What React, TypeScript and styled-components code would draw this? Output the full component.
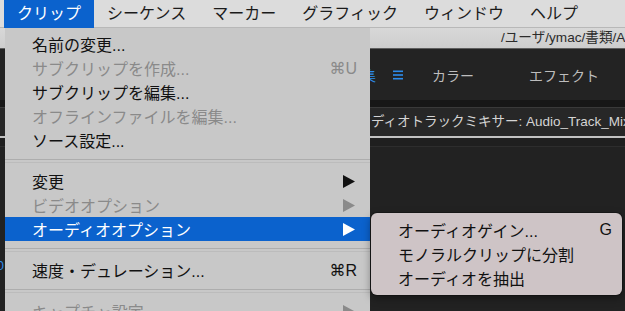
import React from "react";
import styled, { createGlobalStyle } from "styled-components";

const Global = createGlobalStyle`
  html, body { margin: 0; padding: 0; background: #222222; }
  * { box-sizing: border-box; }
`;

const JP = `"Liberation Sans", "Noto Sans CJK JP", "Noto Sans", sans-serif`;

const Screen = styled.div`
  position: relative;
  width: 625px;
  height: 311px;
  overflow: hidden;
  display: flex;
  flex-direction: column;
  font-family: ${JP};
  background: #222222;
`;

const MenuBar = styled.div`
  height: 28px;
  flex: none;
  display: flex;
  align-items: stretch;
  padding-left: 4px;
  background: #dcdcdc;
  border-bottom: 1px solid #b8b8b8;
`;

const MenuTitle = styled.div<{ $active?: boolean }>`
  padding: 0 13px;
  font-size: 16px;
  line-height: 28px;
  height: 28px;
  color: ${(p) => (p.$active ? "#ffffff" : "#1b1b1b")};
  background: ${(p) => (p.$active ? "#0b62cd" : "transparent")};
  white-space: nowrap;
`;

const AppWindow = styled.div`
  flex: 1;
  display: flex;
  flex-direction: column;
  min-height: 0;
`;

const TitleBar = styled.div`
  height: 21px;
  flex: none;
  background: linear-gradient(#d8d8d8, #cdcdcd);
  border-bottom: 1px solid #5e5e5e;
  padding-left: 501px;
  font-size: 13.6px;
  line-height: 20px;
  color: #2b2b2b;
  white-space: nowrap;
  overflow: hidden;
`;

const Toolbar = styled.div`
  height: 51px;
  flex: none;
  background: #232323;
  display: flex;
  align-items: center;
  padding-left: 348px;
  white-space: nowrap;
  overflow: hidden;
`;

const Workspace = styled.div<{ $active?: boolean; $gap?: number }>`
  display: flex;
  align-items: center;
  margin-left: ${(p) => p.$gap ?? 0}px;
  font-size: 14px;
  color: ${(p) => (p.$active ? "#2d8ceb" : "#bdbdbd")};
`;

const MenuLines = styled.svg`
  margin-left: 17px;
  display: block;
`;

const Gutter = styled.div`
  height: 7px;
  flex: none;
  background: #171717;
`;

const PanelHeader = styled.div`
  height: 31px;
  flex: none;
  background: #272727;
  border-top: 1px solid #3a3a3a;
  border-bottom: 2px solid #c2c2c2;
  padding-left: 344px;
  font-size: 13.5px;
  line-height: 28px;
  color: #d4d4d4;
  white-space: nowrap;
  overflow: hidden;
`;

const PanelStrip = styled.div`
  height: 9px;
  flex: none;
  background: #1f1f1f;
  border-bottom: 1px solid #2d2d2d;
`;

const PanelBody = styled.div`
  flex: 1;
  background: #222222;
  display: flex;
  flex-direction: column;
`;

const LeftLabel = styled.div`
  margin-top: 111px;
  width: 4px;
  overflow: hidden;
  direction: rtl;
  font-size: 13px;
  color: #2d8ceb;
  white-space: nowrap;
  font-family: "Liberation Sans", sans-serif;
`;

const DropMenu = styled.div`
  position: absolute;
  top: 28px;
  left: 5px;
  width: 365px;
  height: 300px;
  padding-top: 4px;
  background: #c8c8c8;
`;

const MenuRow = styled.div<{ $disabled?: boolean; $active?: boolean }>`
  height: 24px;
  display: flex;
  align-items: center;
  padding: 0 13px 0 27px;
  font-size: 16px;
  white-space: nowrap;
  color: ${(p) => (p.$active ? "#ffffff" : p.$disabled ? "#8a8a8a" : "#111111")};
  background: ${(p) => (p.$active ? "#0b62cd" : "transparent")};
`;

const Label = styled.span`
  flex: 1;
`;

const Shortcut = styled.span`
  font-family: "Liberation Sans", "DejaVu Sans", sans-serif;
  font-size: 16px;
`;

const Arrow = styled.svg`
  display: block;
  margin-right: 2px;
`;

const Separator = styled.div`
  height: 17px;
  display: flex;
  align-items: center;
  &::after {
    content: "";
    flex: 1;
    height: 2px;
    border-top: 1px solid #adadad;
    border-bottom: 1px solid #bcbcbc;
  }
`;

const SubMenu = styled.div`
  position: absolute;
  top: 213px;
  left: 371px;
  width: 251px;
  height: 82px;
  padding: 5px 0;
  border-radius: 6px;
  background: #cec4c6;
  box-shadow: 0 0 0 1px rgba(0, 0, 0, 0.25), 0 3px 8px rgba(0, 0, 0, 0.4);
`;

const SubRow = styled.div`
  height: 24px;
  display: flex;
  align-items: center;
  padding: 0 10px 0 27px;
  font-size: 16px;
  color: #111111;
  white-space: nowrap;
`;

type Item =
  | { kind: "sep" }
  | {
      kind: "item";
      label: string;
      disabled?: boolean;
      active?: boolean;
      shortcut?: string;
      sub?: boolean;
    };

const items: Item[] = [
  { kind: "item", label: "名前の変更..." },
  { kind: "item", label: "サブクリップを作成...", disabled: true, shortcut: "⌘U" },
  { kind: "item", label: "サブクリップを編集..." },
  { kind: "item", label: "オフラインファイルを編集...", disabled: true },
  { kind: "item", label: "ソース設定..." },
  { kind: "sep" },
  { kind: "item", label: "変更", sub: true },
  { kind: "item", label: "ビデオオプション", disabled: true, sub: true },
  { kind: "item", label: "オーディオオプション", active: true, sub: true },
  { kind: "sep" },
  { kind: "item", label: "速度・デュレーション...", shortcut: "⌘R" },
  { kind: "sep" },
  { kind: "item", label: "キャプチャ設定", disabled: true, sub: true },
];

const SubArrow = ({ color }: { color: string }) => (
  <Arrow width="12" height="13" viewBox="0 0 12 13">
    <path d="M0 0 L12 6.5 L0 13 Z" fill={color} />
  </Arrow>
);

export default function App() {
  return (
    <>
      <Global />
      <Screen>
        <MenuBar>
          <MenuTitle $active>クリップ</MenuTitle>
          <MenuTitle>シーケンス</MenuTitle>
          <MenuTitle>マーカー</MenuTitle>
          <MenuTitle>グラフィック</MenuTitle>
          <MenuTitle>ウィンドウ</MenuTitle>
          <MenuTitle>ヘルプ</MenuTitle>
        </MenuBar>
        <AppWindow>
          <TitleBar>/ユーザ/ymac/書類/Adobe/Premiere Pro/12.0/名称未設定.prproj</TitleBar>
          <Toolbar>
            <Workspace $active>
              編集
              <MenuLines width="10" height="10" viewBox="0 0 10 10">
                <rect x="0" y="0.5" width="10" height="1.6" fill="#2d8ceb" />
                <rect x="0" y="4.2" width="10" height="1.6" fill="#2d8ceb" />
                <rect x="0" y="7.9" width="10" height="1.6" fill="#2d8ceb" />
              </MenuLines>
            </Workspace>
            <Workspace $gap={29}>カラー</Workspace>
            <Workspace $gap={55}>エフェクト</Workspace>
            <Workspace $gap={55}>オーディオ</Workspace>
          </Toolbar>
          <Gutter />
          <PanelHeader>オーディオトラックミキサー: Audio_Track_Mixer</PanelHeader>
          <PanelBody>
            <PanelStrip />
            <LeftLabel>00;00;00;00 R</LeftLabel>
          </PanelBody>
        </AppWindow>

        <DropMenu>
          {items.map((it, i) =>
            it.kind === "sep" ? (
              <Separator key={i} />
            ) : (
              <MenuRow key={i} $disabled={it.disabled} $active={it.active}>
                <Label>{it.label}</Label>
                {it.shortcut && <Shortcut>{it.shortcut}</Shortcut>}
                {it.sub && (
                  <SubArrow
                    color={it.active ? "#ffffff" : it.disabled ? "#8a8a8a" : "#111111"}
                  />
                )}
              </MenuRow>
            )
          )}
        </DropMenu>

        <SubMenu>
          <SubRow>
            <Label>オーディオゲイン...</Label>
            <Shortcut>G</Shortcut>
          </SubRow>
          <SubRow>
            <Label>モノラルクリップに分割</Label>
          </SubRow>
          <SubRow>
            <Label>オーディオを抽出</Label>
          </SubRow>
        </SubMenu>
      </Screen>
    </>
  );
}
